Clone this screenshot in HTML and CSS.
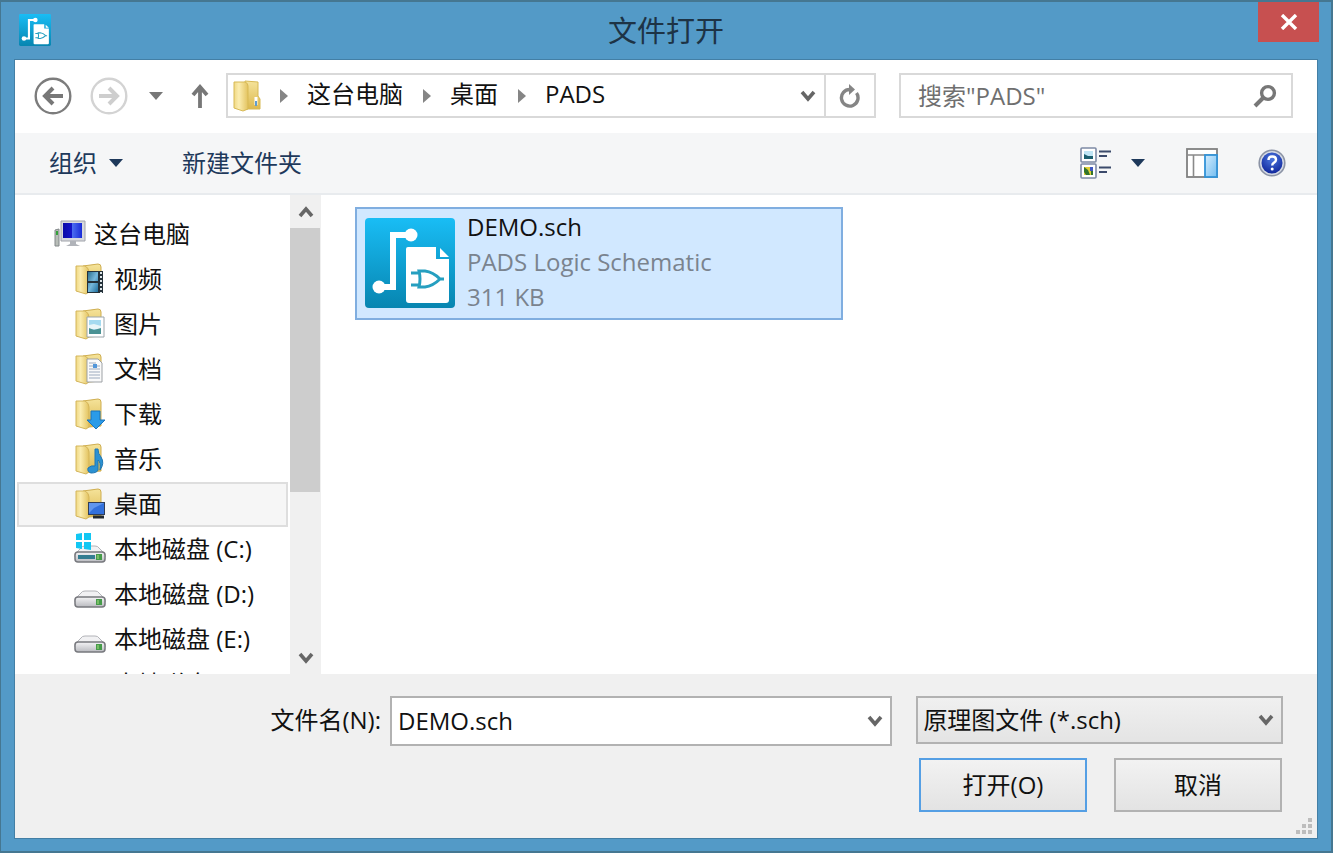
FILE: index.html
```html
<!DOCTYPE html>
<html lang="zh-CN">
<head>
<meta charset="utf-8">
<title>文件打开</title>
<link rel="stylesheet" href="styles.css">
</head>
<body>
<svg class="defs" aria-hidden="true">
  <defs>
    <linearGradient id="g-app" x1="0" y1="0" x2="0" y2="1"><stop offset="0" stop-color="#19bdf5"/><stop offset="1" stop-color="#0785b0"/></linearGradient>
    <linearGradient id="g-fold" x1="0" y1="0" x2="1" y2="0"><stop offset="0" stop-color="#f0d883"/><stop offset="0.35" stop-color="#fbedb0"/><stop offset="1" stop-color="#e3c35f"/></linearGradient>
    <linearGradient id="g-back" x1="0" y1="0" x2="0" y2="1"><stop offset="0" stop-color="#f5e39a"/><stop offset="1" stop-color="#dcb94f"/></linearGradient>
    <linearGradient id="g-screen" x1="0" y1="0" x2="1" y2="0"><stop offset="0" stop-color="#0a0aa8"/><stop offset="0.45" stop-color="#1414c8"/><stop offset="0.5" stop-color="#4a6cf0"/><stop offset="1" stop-color="#1a2cd8"/></linearGradient>
    <linearGradient id="g-disk" x1="0" y1="0" x2="0" y2="1"><stop offset="0" stop-color="#f4f4f6"/><stop offset="1" stop-color="#b9babf"/></linearGradient>
    <linearGradient id="g-film" x1="0" y1="0" x2="1" y2="1"><stop offset="0" stop-color="#2c6f8c"/><stop offset="0.5" stop-color="#77b9dc"/><stop offset="1" stop-color="#1f6f9e"/></linearGradient>
    <linearGradient id="g-pane" x1="0" y1="0" x2="1" y2="1"><stop offset="0" stop-color="#d3ecfd"/><stop offset="1" stop-color="#74bdf0"/></linearGradient>
    <radialGradient id="g-help" cx="0.5" cy="0.3" r="0.7"><stop offset="0" stop-color="#4c78e0"/><stop offset="1" stop-color="#10279c"/></radialGradient>

    <symbol id="app" viewBox="0 0 90 90">
      <rect width="90" height="90" rx="4" fill="url(#g-app)"/>
      <path d="M14 69H28V17H46" fill="none" stroke="#fff" stroke-width="6"/>
      <circle cx="14" cy="69" r="6.5" fill="#fff"/><circle cx="46" cy="17" r="6.5" fill="#fff"/>
      <path d="M43 29H71V41H84V82Q84 85 81 85H44Q41 85 41 82V31Q41 29 43 29Z" fill="#fff"/>
      <path d="M75 30L84 39H75Z" fill="#fff"/>
      <path d="M46 55H54M46 67H54M74 61H79M54 53H60Q68 54 75 61Q68 68 60 69H54Q56 61 54 53Z" fill="none" stroke="#269fc0" stroke-width="3"/>
    </symbol>
    <symbol id="folder" viewBox="0 0 32 32">
      <path d="M9 3L24 1Q27 1 27 4V28L15 29H9Z" fill="url(#g-back)" stroke="#cfae50" stroke-width="1"/>
      <path d="M2 3H11Q15 5 15 9V29L12 31L2 28Z" fill="url(#g-fold)" stroke="#d4b55a" stroke-width="1"/>
    </symbol>
    <symbol id="disk" viewBox="0 0 32 32">
      <path d="M7 13Q8 11 11 11H21Q24 11 25 13L31 19V22H1V19Z" fill="#f1f1f3" stroke="#b2b3b8"/>
      <rect x="1" y="17" width="30" height="10" rx="3" fill="url(#g-disk)" stroke="#77787d" stroke-width="1.5"/>
      <rect x="22" y="19" width="6" height="6" fill="#469b4a"/><path d="M24 20V24" stroke="#a8e07e" stroke-width="1"/>
    </symbol>
    <symbol id="chev" viewBox="0 0 16 12"><path d="M2 2L8 9L14 2" fill="none" stroke="currentColor" stroke-width="3.6"/></symbol>
    <symbol id="tri" viewBox="0 0 16 10"><path d="M1 1H15L8 9Z" fill="currentColor"/></symbol>
    <symbol id="sep" viewBox="0 0 10 16"><path d="M1 1L9 8L1 15Z" fill="#858585"/></symbol>
  </defs>
</svg>

<main class="window">
  <header class="titlebar">
    <svg class="app-icon"><use href="#app"/></svg>
    <h1 class="title">文件打开</h1>
    <button class="close" aria-label="关闭"><svg viewBox="0 0 18 16"><path d="M2 1L16 15M16 1L2 15" stroke="#fff" stroke-width="3.4"/></svg></button>
  </header>

  <div class="client">
    <nav class="navbar">
      <button class="nav-round" aria-label="后退"><svg viewBox="0 0 38 38"><circle cx="19" cy="19" r="17.3" fill="none" stroke="#7c7c7c" stroke-width="2.4"/><path d="M29 19H11M19 11L11 19L19 27" fill="none" stroke="#777" stroke-width="4"/></svg></button>
      <button class="nav-round" aria-label="前进"><svg viewBox="0 0 38 38"><circle cx="19" cy="19" r="17.3" fill="none" stroke="#d3d3d3" stroke-width="2.4"/><path d="M9 19H27M19 11L27 19L19 27" fill="none" stroke="#cecece" stroke-width="4"/></svg></button>
      <button class="nav-recent" aria-label="最近位置"><svg class="tri"><use href="#tri"/></svg></button>
      <button class="nav-up" aria-label="上移"><svg viewBox="0 0 18 26"><path d="M9 25V4M2 12L9 4L16 12" fill="none" stroke="#777" stroke-width="3.8"/></svg></button>
      <div class="address">
        <svg class="address-folder" viewBox="0 0 28 32"><path d="M12 1L25 2V16L27 19V29H12Z" fill="url(#g-back)" stroke="#d7b955"/><path d="M1 2H12Q15 3 15 6V29L10 31L1 28Z" fill="url(#g-fold)" stroke="#d7b955"/><path d="M23 17V25" stroke="#fff" stroke-width="3"/><path d="M23 21V26" stroke="#5f9ccf" stroke-width="2"/></svg>
        <svg class="sep"><use href="#sep"/></svg>
        <a href="#pc">这台电脑</a>
        <svg class="sep"><use href="#sep"/></svg>
        <a href="#desktop">桌面</a>
        <svg class="sep"><use href="#sep"/></svg>
        <a href="#pads">PADS</a>
        <button class="address-drop" aria-label="历史路径"><svg class="chev"><use href="#chev"/></svg></button>
        <button class="refresh" aria-label="刷新"><svg viewBox="0 0 22 24"><path d="M17.500 9A8.300 8.300 0 1 1 11 5.500" fill="none" stroke="#858585" stroke-width="3.4"/><path d="M10 0L16 5.500L10 11Z" fill="#858585"/></svg></button>
      </div>
      <div class="search">
        <input type="search" aria-label="搜索" placeholder="搜索&quot;PADS&quot;">
        <svg class="search-icon" viewBox="0 0 24 24"><circle cx="15" cy="9" r="6.4" fill="none" stroke="#777" stroke-width="3.4"/><path d="M10.500 13.500L2 22" stroke="#777" stroke-width="4"/></svg>
      </div>
    </nav>

    <div class="toolbar">
      <button class="tool organize">组织 <svg class="tri"><use href="#tri"/></svg></button>
      <button class="tool">新建文件夹</button>
      <div class="tool-icons">
        <button class="tool view" aria-label="更改视图">
          <svg class="icon" viewBox="0 0 32 32">
            <rect x="1" y="1" width="15" height="14" rx="1" fill="#fff" stroke="#7d8aa5" stroke-width="1.600"/><path d="M4 4H13V12H4Z" fill="#bfe5f5"/><path d="M4 7L8 9H13V12H4Z" fill="#1c6070"/>
            <rect x="1" y="17" width="15" height="14" rx="1" fill="#fff" stroke="#7d8aa5" stroke-width="1.600"/><rect x="4" y="20" width="9" height="8" fill="#e0cf35"/><path d="M4 20L8 23L10 28H6L4 25ZM11 24H13V28H11Z" fill="#32742c"/><path d="M10 20H13V24H10Z" fill="#3f58c0"/>
            <path d="M19 4.500H31M19 9H27M19 20.500H31M19 25H27" stroke="#3b4a6b" stroke-width="1.800"/>
          </svg>
          <svg class="tri"><use href="#tri"/></svg>
        </button>
        <button class="tool" aria-label="预览窗格"><svg class="icon" viewBox="0 0 32 32"><rect x="1" y="2" width="30" height="28" fill="#fff" stroke="#808080" stroke-width="1.800"/><path d="M1 8H31M7.500 8V30" stroke="#8a8a8a" stroke-width="1.600"/><rect x="19" y="8" width="12" height="22" fill="url(#g-pane)" stroke="#3293d8" stroke-width="1.800"/></svg></button>
        <button class="tool" aria-label="帮助"><svg class="help" viewBox="0 0 28 28"><circle cx="14" cy="14" r="12.800" fill="#d4d9e4" stroke="#8b93a5" stroke-width="1.600"/><circle cx="14" cy="14" r="10.500" fill="url(#g-help)"/><path d="M10.500 11Q10.500 7.500 14.200 7.500Q18 7.500 18 10.700Q18 12.400 16 13.600Q14.200 14.600 14.200 16.500" fill="none" stroke="#fff" stroke-width="2.400"/><circle cx="14.200" cy="20" r="1.500" fill="#fff"/></svg></button>
      </div>
    </div>

    <div class="body">
      <aside class="sidebar">
        <ul class="tree">
          <li class="node root"><svg class="icon" viewBox="0 0 32 32"><path d="M1 12L5 11V28H1Z" fill="#b8bdb8" stroke="#83888a"/><path d="M3 13V17" stroke="#35a23a" stroke-width="2"/><path d="M7 3H31V23H7Z" fill="#d7d9dd" stroke="#a0a3aa"/><path d="M9 5H28V20H9Z" fill="url(#g-screen)"/><path d="M16 23H22V26L26 28H12L16 26Z" fill="#b0b3b9"/></svg>这台电脑</li>
          <li class="node"><svg class="icon" viewBox="0 0 32 32"><use href="#folder" width="32" height="32"/><path d="M13 8H29V30H13Z" fill="#25323a"/><path d="M14 9H24V18H14ZM14 20H24V29H14Z" fill="url(#g-film)"/><path d="M27 9V30" stroke="#dfe7ea" stroke-width="2" stroke-dasharray="2 2"/></svg>视频</li>
          <li class="node"><svg class="icon" viewBox="0 0 32 32"><use href="#folder" width="32" height="32"/><path d="M13 9H30V29H13Z" fill="#fff" stroke="#9ba6ac"/><path d="M15 12H27V26H15Z" fill="#a4daf0"/><path d="M15 17L20 16L27 18V21H15Z" fill="#e8f5f8"/><path d="M15 20L20 22L27 20V26H15Z" fill="#4a9294"/></svg>图片</li>
          <li class="node"><svg class="icon" viewBox="0 0 32 32"><use href="#folder" width="32" height="32"/><path d="M13 6H24L28 10V29H13Z" fill="#fafafa" stroke="#9da1a5"/><path d="M15 10H22M15 13H26M15 16H26M15 19H26M15 22H26M15 25H26" stroke="#9baabd" stroke-width="1.200"/><path d="M19 11H23V15H19Z" fill="#5196da"/></svg>文档</li>
          <li class="node"><svg class="icon" viewBox="0 0 32 32"><use href="#folder" width="32" height="32"/><path d="M17 13H26V22H31L22 31L13 22H17Z" fill="#2b9be8" stroke="#1b74bb"/></svg>下载</li>
          <li class="node"><svg class="icon" viewBox="0 0 32 32"><use href="#folder" width="32" height="32"/><path d="M21 6H24Q24 11 27 14Q31 20 26 27Q27 19 24 17V27Q23 30 17 30Q13 29 14 25Q17 22 21 23Z" fill="#2b91d2" stroke="#1e76b3"/></svg>音乐</li>
          <li class="node selected"><svg class="icon" viewBox="0 0 32 32"><use href="#folder" width="32" height="32"/><path d="M14 14H31V27H14Z" fill="#303e58"/><path d="M15 15H30V26H15Z" fill="#3270dc"/><path d="M15 15H30L20 20L15 25Z" fill="#6096ee"/><path d="M19 29H30" stroke="#22282f" stroke-width="3"/></svg>桌面</li>
          <li class="node"><svg class="icon" viewBox="0 0 32 32"><use href="#disk" y="2" width="32" height="32"/><path d="M4 22H21V26H4Z" fill="#347d91"/><path d="M2 1L8 0V7H2ZM10 0H17V7H10ZM2 9H8V16L2 15ZM10 9H17V17L10 16Z" fill="#12c7f3"/></svg>本地磁盘 (C:)</li>
          <li class="node"><svg class="icon"><use href="#disk" y="2"/></svg>本地磁盘 (D:)</li>
          <li class="node"><svg class="icon"><use href="#disk" y="2"/></svg>本地磁盘 (E:)</li>
          <li class="node"><svg class="icon"></svg>本地磁盘 (F:)</li>
        </ul>
        <div class="scrollbar">
          <button class="scroll-up" aria-label="向上滚动"><svg class="chev"><use href="#chev"/></svg></button>
          <div class="track"><div class="thumb"></div></div>
          <button aria-label="向下滚动"><svg class="chev"><use href="#chev"/></svg></button>
        </div>
      </aside>
      <section class="files">
        <article class="file">
          <svg class="file-icon"><use href="#app"/></svg>
          <div class="file-info">
            <p class="file-name">DEMO.sch</p>
            <p>PADS Logic Schematic</p>
            <p>311 KB</p>
          </div>
        </article>
      </section>
    </div>

    <footer class="footer">
      <div class="fields">
        <label for="filename">文件名(N):</label>
        <div class="combo">
          <input id="filename" type="text" value="DEMO.sch">
          <button aria-label="文件名列表"><svg class="chev"><use href="#chev"/></svg></button>
        </div>
        <div class="filter">
          <select aria-label="文件类型"><option>原理图文件 (*.sch)</option></select>
          <svg class="chev"><use href="#chev"/></svg>
        </div>
      </div>
      <div class="actions">
        <button class="btn primary">打开(O)</button>
        <button class="btn">取消</button>
      </div>
      <svg class="grip" viewBox="0 0 16 16"><path d="M12 0H16V4H12ZM6 6H10V10H6ZM12 6H16V10H12ZM0 12H4V16H0ZM6 12H10V16H6ZM12 12H16V16H12Z" fill="#bdbdbd"/></svg>
    </footer>
  </div>
</main>
</body>
</html>
```
FILE: styles.css
```css
* { box-sizing: border-box; }

body {
  margin: 0;
  color: #111;
  font: 24px/32px "Open Sans", "Noto Sans CJK SC", sans-serif;
}

button, input, select { font: inherit; color: inherit; }
button { display: flex; align-items: center; justify-content: center; padding: 0; border: 0; background: none; }
a { color: inherit; text-decoration: none; }
svg { display: block; flex: none; }
.defs { position: absolute; width: 0; height: 0; }

.tri { width: 16px; height: 10px; }
.chev { width: 16px; height: 12px; color: #666; }
.sep { width: 10px; height: 16px; }
.icon { width: 32px; height: 32px; }

.window {
  display: flex;
  flex-direction: column;
  height: 100vh;
  min-height: 560px;
  padding: 0 13px 12px;
  border: 2px solid #457791;
  border-width: 2px 2px 2px 1px;
  background: #539ac7;
}

/* Title bar */
.titlebar { display: grid; grid-template-columns: 1fr auto 1fr; align-items: start; height: 57px; }
.app-icon { width: 32px; height: 32px; margin: 12px 0 0 5px; }
.title { margin: 8px 0 0; font-size: 29px; line-height: 42px; font-weight: 400; color: #1d3345; }
.close { justify-self: end; width: 61px; height: 40px; margin-right: -1px; background: #c75050; }
.close svg { width: 18px; height: 16px; }

.client {
  display: flex;
  flex: 1;
  flex-direction: column;
  min-height: 0;
  border: 1px solid #437fa5;
  background: #fff;
}

/* Navigation row */
.navbar { display: flex; align-items: center; height: 73px; padding: 0 24px 2px 19px; }
.nav-round { margin-right: 18px; }
.nav-round svg { width: 38px; height: 38px; }
.nav-recent { width: 20px; color: #777; }
.nav-up { width: 30px; margin: 0 11px 0 19px; }
.nav-up svg { width: 18px; height: 26px; }
.address, .search { display: flex; align-items: center; height: 45px; border: 2px solid #d9d9d9; }
.address { flex: 1; }
.address-folder { width: 28px; height: 32px; margin: 0 18px 0 5px; }
.address a { margin: 0 19px 4px 18px; }
.address-drop { width: 32px; height: 100%; margin-left: auto; color: #777; }
.refresh { width: 50px; height: 100%; border-left: 2px solid #d9d9d9; }
.refresh svg { width: 22px; height: 24px; }
.search { width: 30%; margin-left: 23px; padding: 0 14px 0 17px; }
.search input { flex: 1; min-width: 0; padding: 0; border: 0; outline: 0; background: none; }
.search input::placeholder { color: #6f6f6f; opacity: 1; }
.search-icon { width: 24px; height: 24px; }

@media (min-width: 1200px) {
  .search { width: 394px; }
}

/* Command bar */
.toolbar {
  display: flex;
  align-items: center;
  gap: 58px;
  height: 62px;
  padding: 0 31px 0 34px;
  border-bottom: 2px solid #e8ebee;
  background: #f5f6f7;
  color: #1e395b;
}
.organize { gap: 11px; }
.tool-icons { display: flex; align-items: center; gap: 40px; margin-left: auto; }
.view { gap: 18px; }
.help { width: 28px; height: 28px; }

/* Folder tree and file list */
.body { display: flex; flex: 1; min-height: 0; }
.sidebar { display: flex; flex: none; width: 306px; overflow: hidden; }
.tree { flex: 1; margin: 0; padding: 17px 2px 0; list-style: none; }
.node { display: flex; align-items: center; gap: 8px; height: 45px; padding: 0 0 2px 55px; border: 2px solid transparent; white-space: nowrap; }
.root { padding-left: 35px; }
.selected { border-color: #dedede; background: #f6f6f6; }
.scrollbar { display: flex; flex-direction: column; width: 31px; background: #f0f0f0; }
.scrollbar button { height: 33px; }
.scroll-up svg { transform: rotate(180deg); }
.track { flex: 1; }
.thumb { width: 30px; height: 64%; background: #cdcdcd; }
.files { flex: 1; padding: 12px 34px; }
.file { display: flex; align-items: flex-start; gap: 12px; width: 488px; padding: 0 8px 4px; border: 2px solid #80aee0; background: #d1e8ff; }
.file-icon { width: 90px; height: 90px; margin-top: 9px; }
.file-info { color: #7a838e; line-height: 35px; }
.file-info p { margin: 0; }
.file-info .file-name { color: #111; }

/* Footer */
.footer { position: relative; padding: 22px 34px 26px 24px; background: #f0f0f0; }
.fields { display: flex; align-items: flex-start; }
.fields label { width: 351px; padding-right: 9px; line-height: 48px; text-align: right; }
.combo { display: flex; flex: 503; height: 50px; border: 2px solid #b2b2b2; background: #fff; }
.combo input { flex: 1; min-width: 0; padding: 0 6px; border: 0; outline: 0; background: none; }
.combo button { width: 30px; }
.filter { display: grid; flex: 366; align-items: center; height: 48px; margin-left: 24px; border: 2px solid #b2b2b2; background: linear-gradient(#f0f0f0, #e4e4e4); }
.filter > * { grid-area: 1 / 1; }
.filter select { width: 100%; height: 44px; padding: 0 5px; border: 0; outline: 0; appearance: none; background: none; }
.filter .chev { justify-self: end; margin-right: 7px; pointer-events: none; }
.actions { display: flex; justify-content: flex-end; gap: 27px; margin-top: 12px; padding-right: 1px; }
.btn { width: 168px; height: 54px; border: 2px solid #b2b2b2; background: linear-gradient(#f2f2f2, #e3e3e3); }
.primary { border-color: #559fe4; }
.grip { position: absolute; right: 5px; bottom: 4px; width: 16px; height: 16px; }
```
